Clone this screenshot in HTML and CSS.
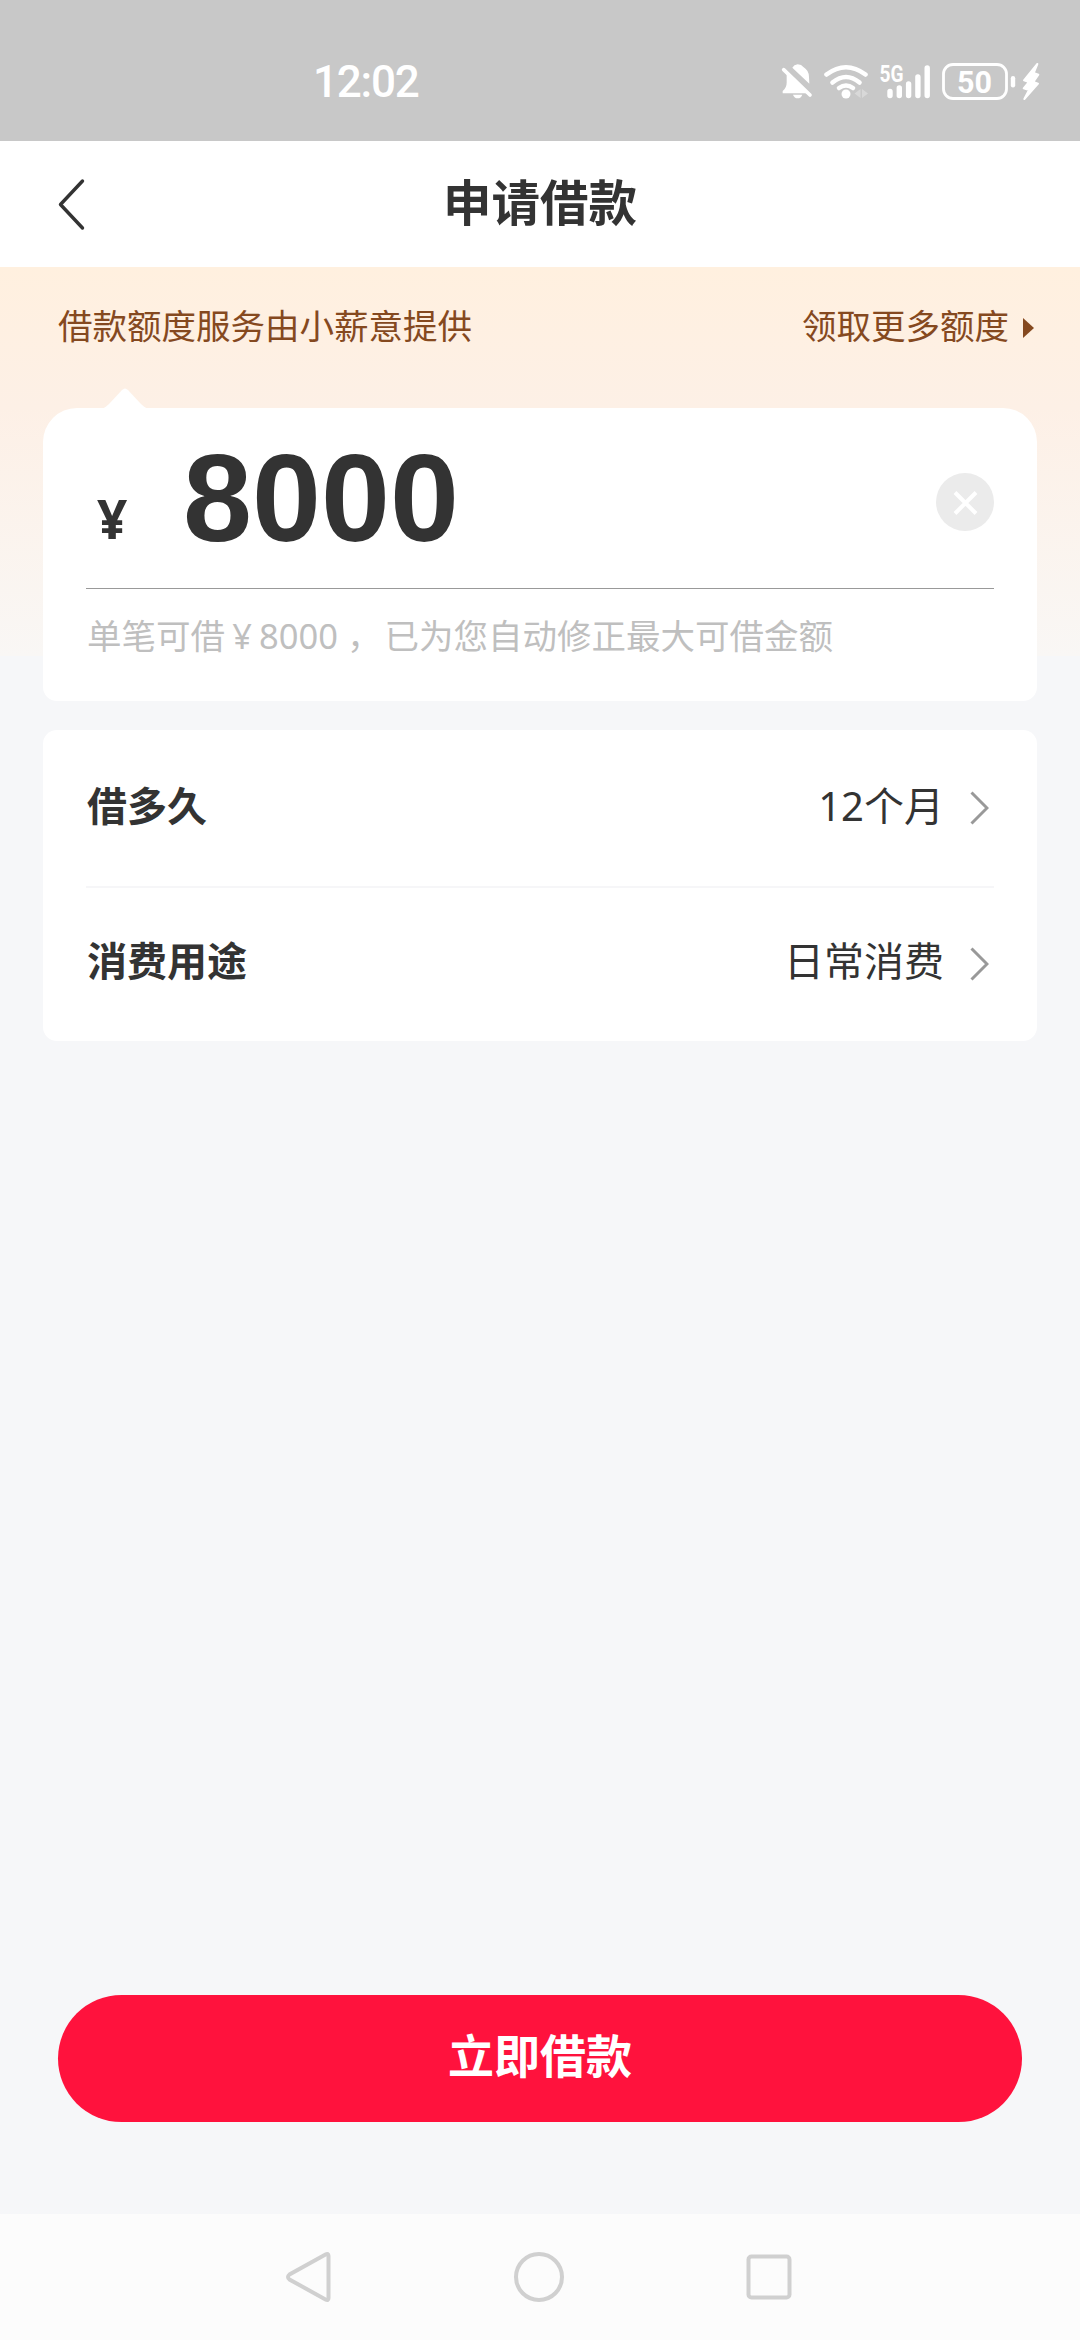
FILE: index.html
```html
<!DOCTYPE html>
<html lang="zh-CN">
<head>
<meta charset="utf-8">
<title>申请借款</title>
<link rel="stylesheet" href="styles.css">
</head>
<body>
<div class="screen">
  <div class="status">
    <span class="clock">12:02</span>
    <svg class="status-icons" width="270" height="44" viewBox="776 58 270 44" fill="#fff">
      <g transform="translate(760 40) scale(.33333)">
        <path d="M97 80Q102 71 113 70Q125 71 130 78Q147 88 147 108L148 128z"/>
        <path d="M80 96V125Q80 140 68 150V157H144L82 98z"/>
        <path d="M71 86L150 162" stroke="#fff" stroke-width="11" stroke-linecap="round"/>
        <path d="M99 161H127Q123 172 113 172T99 161z"/>
        <path d="M831 69L791 118L806 123L790 142L806 147L792 174L833 128L819 123L834 101L820 96z" transform="translate(1 0)" stroke="#fff" stroke-width="6" stroke-linejoin="round"/>
      </g>
      <g fill="none" stroke="#fff" stroke-width="4.600" stroke-linecap="round">
        <path d="M826.500 73.500Q846 59 865.500 73.500"/>
        <path d="M832.500 81.500Q846 70.500 859.500 81.500"/>
        <path d="M839 87Q846 82 853 87"/>
      </g>
      <circle cx="846" cy="93" r="4.500"/>
      <path d="M860.500 88v9l-6-4.500zM862 88v9l6-4.500z" opacity=".3"/>
      <text class="net" x="879.500" y="80.500" textLength="24" lengthAdjust="spacingAndGlyphs">5G</text>
      <g stroke="#fff" stroke-width="5.400" stroke-linecap="round">
        <path d="M890 94.500V90.500M899.300 94.500V87M908.600 94.500V83M917.900 94.500V76M927.200 94.500V67"/>
      </g>
      <rect x="943.500" y="63.500" width="63" height="34" rx="9.500" fill="none" stroke="#fff" stroke-width="2.800"/>
      <text class="level" x="957" y="92" textLength="35" lengthAdjust="spacingAndGlyphs">50</text>
      <rect x="1010.800" y="75" width="4.400" height="11.500" rx="2.200"/>
    </svg>
  </div>

  <header class="header">
    <svg class="back" width="30" height="56" viewBox="0 0 30 56" fill="none" stroke="#333" stroke-width="3.400" stroke-linecap="round" stroke-linejoin="round"><path d="M25.500 5L3.500 28.500L25.500 52"/></svg>
    <h1 class="title">申请借款</h1>
  </header>

  <main class="main">
    <div class="hero">
      <div class="notice">
        <span>借款额度服务由小薪意提供</span>
        <span class="more">领取更多额度<svg width="11" height="20" viewBox="0 0 11 20" fill="#85491f"><path d="M0 0L11 10L0 20z"/></svg></span>
      </div>
      <section class="card amount">
        <svg class="notch" width="46" height="21" viewBox="0 0 46 21" fill="#fff"><path d="M0 21Q4 19 7 16L20 2Q23-1 26 2L39 16Q42 19 46 21z"/></svg>
        <div class="entry">
          <span class="yen">¥</span>
          <span class="value">8000</span>
          <svg class="clear" width="58" height="58" viewBox="0 0 58 58"><circle cx="29" cy="29" r="29" fill="#ebebeb"/><path d="M19 19.500L40 40.500M40 19.500L19 40.500" stroke="#fff" stroke-width="4" fill="none"/></svg>
        </div>
        <p class="hint">单笔可借<span class="sign">¥</span>8000<span class="comma">，</span>已为您自动修正最大可借金额</p>
      </section>
    </div>

    <section class="card options">
      <div class="row">
        <span class="label">借多久</span>
        <span class="choice">12个月</span>
        <svg class="go" width="19" height="34" viewBox="0 0 19 34" fill="none" stroke="#999" stroke-width="3"><path d="M1.500 1.500L17 17L1.500 32.500"/></svg>
      </div>
      <div class="row">
        <span class="label">消费用途</span>
        <span class="choice">日常消费</span>
        <svg class="go" width="19" height="34" viewBox="0 0 19 34" fill="none" stroke="#999" stroke-width="3"><path d="M1.500 1.500L17 17L1.500 32.500"/></svg>
      </div>
    </section>

    <button class="submit">立即借款</button>
  </main>

  <nav class="nav">
    <svg width="50" height="56" viewBox="0 0 50 56"><path d="M41.500 5.500Q44.500 4 44.500 7V49Q44.500 52 41.500 50.500L5.500 30.500Q2.500 28 5.500 25.500z"/></svg>
    <svg width="54" height="54" viewBox="0 0 54 54"><circle cx="27" cy="27" r="23"/></svg>
    <svg width="50" height="50" viewBox="0 0 50 50"><rect x="4.500" y="4.500" width="41" height="41" rx="3"/></svg>
  </nav>
</div>
</body>
</html>
```

FILE: styles.css
```css
* {
  box-sizing: border-box;
}

body {
  margin: 0;
  background: #f6f7f9;
  color: #333;
  font-family: "Noto Sans", "Noto Sans CJK SC", sans-serif;
}

svg {
  display: block;
  flex: none;
}

.screen {
  width: 1080px;
  height: 2340px;
  display: flex;
  flex-direction: column;
  overflow: hidden;
}

.status {
  height: 141px;
  padding: 20px 34px 0 313px;
  display: flex;
  align-items: center;
  justify-content: space-between;
  background: #c8c8c8;
  color: #fff;
}

.clock {
  padding-top: 2px;
  font: 500 44px/60px Roboto, sans-serif;
  letter-spacing: -1.2px;
}

.net {
  font: 700 23px Roboto, sans-serif;
}

.level {
  font: 700 31px Roboto, sans-serif;
}

.header {
  height: 126px;
  padding: 0 57px;
  display: grid;
  grid-template-columns: 30px 1fr 30px;
  align-items: center;
  background: #fff;
}

.title {
  margin: 0 0 5px;
  text-align: center;
  font-size: 48.500px;
  line-height: 60px;
  font-weight: 700;
}

.main {
  flex: 1;
  display: flex;
  flex-direction: column;
}

.hero {
  padding: 0 43px;
  background: linear-gradient(#fff0df 0, #fdf0e6 140px, #f9f7f5 389px, #f6f7f9 389px);
}

.notice {
  height: 141px;
  padding: 36px 3px 0 15px;
  display: flex;
  align-items: flex-start;
  justify-content: space-between;
  color: #85491f;
  font-size: 34.5px;
  line-height: 46px;
}

.more {
  display: flex;
  align-items: center;
  gap: 14px;
}

.more svg {
  margin-top: 3px;
}

.card {
  border-radius: 14px;
  background: #fff;
}

.amount {
  position: relative;
  height: 293px;
  padding: 0 43px;
  border-radius: 34px 34px 14px 14px;
}

.notch {
  position: absolute;
  left: 59px;
  top: -20px;
}

.entry {
  height: 181px;
  padding-left: 11px;
  display: flex;
  border-bottom: 1px solid #999;
  font-weight: 700;
}

.yen {
  width: 86px;
  padding-top: 73px;
  font-size: 53px;
  line-height: 76px;
}

.value {
  flex: 1;
  font-family: "Liberation Sans", Arial, sans-serif;
  font-size: 124px;
  line-height: 180px;
}

.clear {
  margin-top: 65px;
}

.hint {
  margin: 23px 0 0;
  padding-left: 1px;
  color: #bfbfbf;
  font-size: 34.500px;
  line-height: 48px;
  white-space: nowrap;
}

.sign {
  display: inline-block;
  width: 34px;
  text-align: center;
}

.comma {
  margin: 0 3px 0 9px;
}

.options {
  margin: 29px 43px 0;
  height: 311px;
  padding: 0 43px;
}

.row {
  height: 156px;
  padding-right: 5px;
  display: flex;
  align-items: center;
  font-size: 40px;
  line-height: 56px;
}

.row + .row {
  height: 154px;
  border-top: 2px solid #f6f6f8;
}

.label {
  flex: 1;
  padding: 0 0 4px 1px;
  font-weight: 700;
}

.row + .row .label,
.row + .row .choice {
  padding-bottom: 6px;
}

.choice {
  padding-bottom: 4px;
  margin-right: 26px;
}

.submit {
  margin: auto 58px 92px;
  height: 127px;
  padding: 0 0 8px;
  border: 0;
  border-radius: 64px;
  background: #ff123d;
  color: #fff;
  font: 700 46px/60px "Noto Sans", "Noto Sans CJK SC", sans-serif;
}

.nav {
  height: 126px;
  padding: 0 286px 0 284px;
  display: flex;
  align-items: center;
  justify-content: space-between;
  background: #fcfcfc;
  fill: none;
  stroke: #d0d0d0;
  stroke-width: 4;
}
```
